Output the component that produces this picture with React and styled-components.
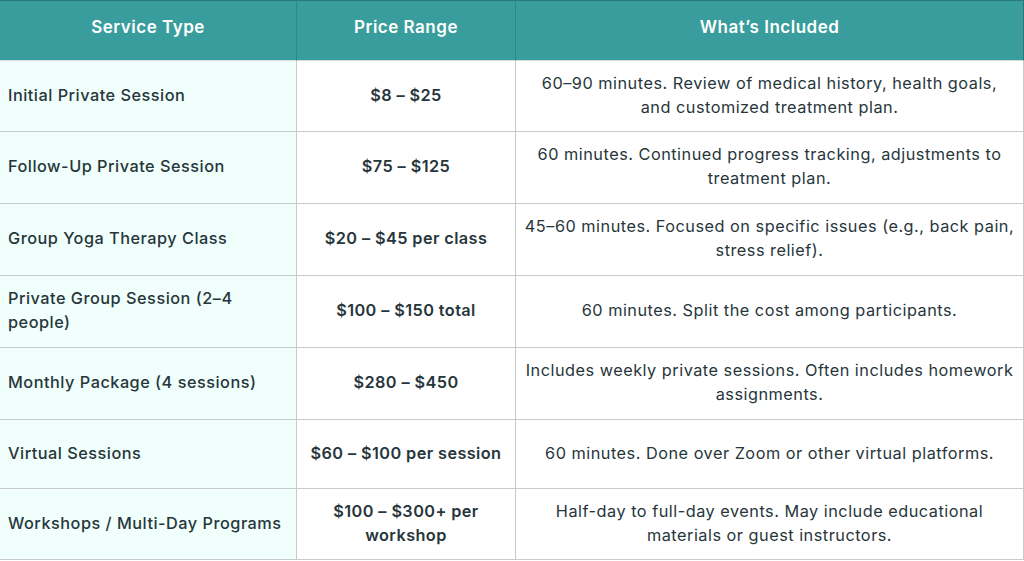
import React from 'react';
import styled, { createGlobalStyle } from 'styled-components';

const GlobalStyle = createGlobalStyle`
  html, body {
    margin: 0;
    padding: 0;
    background: #ffffff;
  }
  body {
    font-family: Inter, "Noto Sans", "Liberation Sans", sans-serif;
    color: #27363b;
  }
`;

const rows = [
  {
    service: 'Initial Private Session',
    price: '$8 – $25',
    included: ['60–90 minutes. Review of medical history, health goals,', 'and customized treatment plan.'],
    height: 71,
  },
  {
    service: 'Follow-Up Private Session',
    price: '$75 – $125',
    included: ['60 minutes. Continued progress tracking, adjustments to', 'treatment plan.'],
    height: 72,
  },
  {
    service: 'Group Yoga Therapy Class',
    price: '$20 – $45 per class',
    included: ['45–60 minutes. Focused on specific issues (e.g., back pain,', 'stress relief).'],
    height: 72,
  },
  {
    service: 'Private Group Session (2–4 people)',
    price: '$100 – $150 total',
    included: ['60 minutes. Split the cost among participants.'],
    height: 72,
  },
  {
    service: 'Monthly Package (4 sessions)',
    price: '$280 – $450',
    included: ['Includes weekly private sessions. Often includes homework', 'assignments.'],
    height: 72,
  },
  {
    service: 'Virtual Sessions',
    price: '$60 – $100 per session',
    included: ['60 minutes. Done over Zoom or other virtual platforms.'],
    height: 69,
  },
  {
    service: 'Workshops / Multi-Day Programs',
    price: '$100 – $300+ per workshop',
    included: ['Half-day to full-day events. May include educational', 'materials or guest instructors.'],
    height: 71,
  },
];

const Table = styled.div`
  width: 1024px;
  display: grid;
  grid-template-columns: 297px 219px 508px;
  box-sizing: border-box;
`;

const HeadCell = styled.div`
  height: 61px;
  box-sizing: border-box;
  padding-bottom: 7px;
  background: #389d9c;
  border-top: 1px solid #2a7877;
  border-right: 1px solid ${p => (p.last ? '#2a7877' : '#2f8786')};
  border-bottom: 1px solid #d4dcdc;
  display: flex;
  align-items: center;
  justify-content: center;
  color: #ffffff;
  font-size: 17px;
  font-weight: 600;
  letter-spacing: 0.5px;
`;

const Cell = styled.div`
  height: ${p => p.h}px;
  box-sizing: border-box;
  border-right: 1px solid #c9cccc;
  border-bottom: 1px solid #c9cccc;
  background: ${p => (p.tint ? '#f0fffb' : '#ffffff')};
  display: flex;
  flex-direction: column;
  align-items: ${p => (p.center ? 'center' : 'flex-start')};
  justify-content: center;
  text-align: ${p => (p.center ? 'center' : 'left')};
  padding: 0 ${p => p.pad || 8}px 3px;
  font-size: 16.3px;
  line-height: 24px;
  letter-spacing: ${p => p.ls || 0.4}px;
  font-weight: ${p => p.weight || 400};
  color: #27363b;
`;

const Line = styled.span`
  display: block;
  white-space: nowrap;
`;

export default function App() {
  return (
    <>
      <GlobalStyle />
      <Table>
        <HeadCell>Service Type</HeadCell>
        <HeadCell>Price Range</HeadCell>
        <HeadCell last>What’s Included</HeadCell>
        {rows.map(r => (
          <React.Fragment key={r.service}>
            <Cell h={r.height} tint weight={500} pad={8} ls={0.5}>{r.service}</Cell>
            <Cell h={r.height} center weight={600} pad={12} ls={0.4}>{r.price}</Cell>
            <Cell h={r.height} center pad={4} ls={0.5}>
              {r.included.map(line => (
                <Line key={line}>{line}</Line>
              ))}
            </Cell>
          </React.Fragment>
        ))}
      </Table>
    </>
  );
}
